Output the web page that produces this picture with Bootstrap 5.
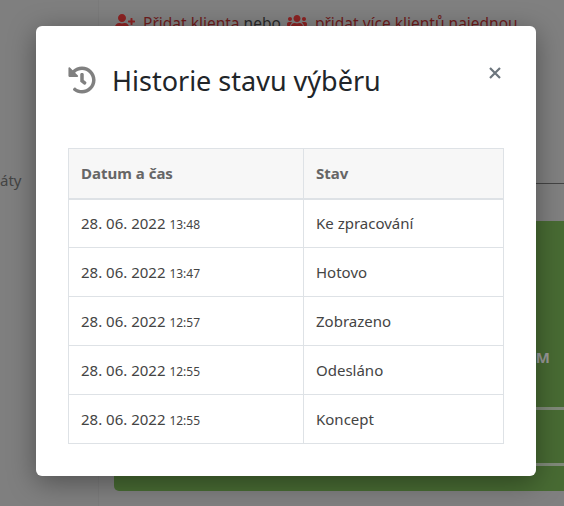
<!DOCTYPE html>
<html lang="cs">
<head>
<meta charset="utf-8">
<title>Historie stavu výběru</title>
<link rel="stylesheet" href="https://cdn.jsdelivr.net/npm/bootstrap@5.3.0/dist/css/bootstrap.min.css">
<style>
html,body{height:100%;}
body{font-family:"Noto Sans","Open Sans","Liberation Sans",sans-serif;background:#808080;overflow:hidden;color:#212529;}
.stage{height:506px;width:564px;overflow:hidden;position:relative;background:#808080;}
.side{width:99px;flex:none;border-right:1px solid #7b7b7b;background:#7f7f7f;font-size:15px;color:#444;padding-top:169px;overflow:hidden;}
.mainarea{flex:1;padding:11px 0 0 16px;min-width:0;}
.toplinks{font-size:15.5px;white-space:nowrap;color:#2a2a2a;line-height:24px;}
.toplinks a{color:#6e1c1c;text-decoration:underline;}
.toplinks svg{width:20px;height:16px;fill:#8c2222;vertical-align:-1px;margin-right:4px;}
.toplinks svg.usersicon{margin-left:2px;}
.rule{height:1px;background:#444;margin-top:148px;margin-left:160px;}
.greenbox{margin-top:37px;margin-left:-1px;height:270px;background:#486b33;border-radius:5px 0 0 5px;position:relative;font-weight:700;}
.greenm{position:absolute;right:14px;top:125px;font-size:15px;color:#9a9a9a;}
.gline{position:absolute;left:0;right:0;height:3px;background:#808a7a;}
.gl1{top:186px}.gl2{top:242px}
.dialog-sim{position:absolute;left:36px;top:26px;width:500px;height:450px;background:#fff;border-radius:6px;box-shadow:0 6px 28px rgba(0,0,0,.38);padding:32px;}
.dhead{height:90px;}
.dhead svg{width:28px;height:28px;flex:none;margin-top:8px;fill:#808080;}
.dhead h4{font-size:27px;font-weight:400;margin:0;line-height:44px;margin-left:16px;margin-top:1px;color:#212529;}
.xbtn{background:none;border:0;padding:0;position:absolute;right:34px;top:40px;width:14px;height:14px;line-height:0;}
.xbtn svg{width:14px;height:14px;stroke:#6c757d;stroke-width:2.2;}
.thist{font-size:15px;margin:0;border-color:#dee2e6;color:#444;table-layout:fixed;}
.thist th{background:#f7f7f7;color:#666;font-weight:700;height:50px;padding:0 12px;vertical-align:middle;border-bottom-width:2px;}
.thist td{height:49px;padding:0 12px;vertical-align:middle;}
.thist small{font-size:12px;}
.c1{width:235px}
</style>
</head>
<body>
<div class="stage d-flex">
  <div class="side">áty</div>
  <div class="mainarea">
    <div class="toplinks">
      <svg viewBox="0 0 640 512"><path d="M624 208h-64v-64c0-8.800-7.200-16-16-16h-32c-8.800 0-16 7.200-16 16v64h-64c-8.800 0-16 7.200-16 16v32c0 8.800 7.200 16 16 16h64v64c0 8.800 7.200 16 16 16h32c8.800 0 16-7.200 16-16v-64h64c8.800 0 16-7.200 16-16v-32c0-8.800-7.200-16-16-16zm-400 48c70.700 0 128-57.300 128-128S294.700 0 224 0 96 57.300 96 128s57.300 128 128 128zm89.600 32h-16.700c-22.200 10.200-46.900 16-72.900 16s-50.600-5.800-72.900-16h-16.700C60.200 288 0 348.200 0 422.400V464c0 26.500 21.500 48 48 48h352c26.500 0 48-21.500 48-48v-41.600c0-74.200-60.200-134.400-134.400-134.400z"/></svg>
      <a href="#">Přidat klienta</a> nebo
      <svg class="usersicon" viewBox="0 0 640 512"><path d="M96 224c35.300 0 64-28.700 64-64s-28.700-64-64-64-64 28.700-64 64 28.700 64 64 64zm448 0c35.300 0 64-28.700 64-64s-28.700-64-64-64-64 28.700-64 64 28.700 64 64 64zm32 32h-64c-17.600 0-33.500 7.100-45.100 18.600 40.300 22.100 68.900 62 75.100 109.400h66c17.700 0 32-14.300 32-32v-32c0-35.300-28.700-64-64-64zm-256 0c61.900 0 112-50.100 112-112S381.900 32 320 32 208 82.100 208 144s50.100 112 112 112zm76.800 32h-8.300c-20.800 10-43.900 16-68.500 16s-47.600-6-68.500-16h-8.300C179.600 288 128 339.600 128 403.200V432c0 26.500 21.500 48 48 48h288c26.500 0 48-21.500 48-48v-28.800c0-63.600-51.600-115.200-115.200-115.200zm-223.700-13.400C161.500 263.100 145.600 256 128 256H64c-35.300 0-64 28.700-64 64v32c0 17.700 14.300 32 32 32h65.900c6.300-47.400 34.900-87.300 75.200-109.400z"/></svg>
      <a href="#">přidat více klientů najednou</a>
    </div>
    <div class="rule"></div>
    <div class="greenbox">
      <span class="greenm">M</span>
      <div class="gline gl1"></div>
      <div class="gline gl2"></div>
    </div>
  </div>
  <div class="dialog-sim">
    <div class="dhead d-flex align-items-start">
      <svg viewBox="0 0 512 512"><path d="M504 255.531c.253 136.640-111.180 248.372-247.820 248.468-59.015.042-113.223-20.530-155.822-54.911-11.077-8.940-11.905-25.541-1.839-35.607l11.267-11.267c8.609-8.609 22.353-9.551 31.891-1.984C173.062 425.135 212.781 440 256 440c101.705 0 184-82.311 184-184 0-101.705-82.311-184-184-184-48.814 0-93.149 18.969-126.068 49.932l50.754 50.754c10.080 10.080 2.941 27.314-11.313 27.314H24c-8.837 0-16-7.163-16-16V38.627c0-14.254 17.234-21.393 27.314-11.314l49.372 49.372C129.209 34.136 189.552 8 256 8c136.810 0 247.747 110.780 248 247.531zm-180.912 78.784l9.823-12.630c8.138-10.463 6.253-25.542-4.210-33.679L288 256.349V152c0-13.255-10.745-24-24-24h-16c-13.255 0-24 10.745-24 24v135.651l65.409 50.874c10.463 8.137 25.541 6.253 33.679-4.210z"/></svg>
      <h4>Historie stavu výběru</h4>
    </div>
    <button class="xbtn" type="button" aria-label="Zavřít"><svg viewBox="0 0 14 14"><path d="M2 2l10 10M12 2L2 12"/></svg></button>
    <table class="table table-bordered thist">
      <thead><tr><th class="c1">Datum a čas</th><th>Stav</th></tr></thead>
      <tbody>
        <tr><td>28. 06. 2022 <small>13:48</small></td><td>Ke zpracování</td></tr>
        <tr><td>28. 06. 2022 <small>13:47</small></td><td>Hotovo</td></tr>
        <tr><td>28. 06. 2022 <small>12:57</small></td><td>Zobrazeno</td></tr>
        <tr><td>28. 06. 2022 <small>12:55</small></td><td>Odesláno</td></tr>
        <tr><td>28. 06. 2022 <small>12:55</small></td><td>Koncept</td></tr>
      </tbody>
    </table>
  </div>
</div>
<script src="https://cdn.jsdelivr.net/npm/bootstrap@5.3.0/dist/js/bootstrap.bundle.min.js"></script>
</body>
</html>
